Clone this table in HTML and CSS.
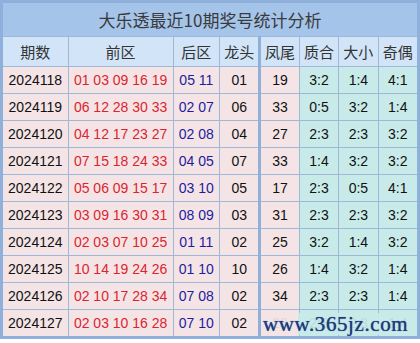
FILE: index.html
```html
<!DOCTYPE html>
<html>
<head>
<meta charset="utf-8">
<link rel="stylesheet" href="styles.css">
</head>
<body>
<div class="wrap">
<table class="stats">
<colgroup>
<col class="c-qi"><col class="c-qian"><col class="c-hou"><col class="c-long"><col class="c-feng"><col class="c-zh"><col class="c-dx"><col class="c-jo">
</colgroup>
<thead>
<tr><th colspan="8" class="title">大乐透最近10期奖号统计分析</th></tr>
<tr class="head"><th>期数</th><th>前区</th><th>后区</th><th class="sep">龙头</th><th>凤尾</th><th>质合</th><th>大小</th><th>奇偶</th></tr>
</thead>
<tbody>
<tr><td>2024118</td><td class="red">01 03 09 16 19</td><td class="blue">05 11</td><td class="sep">01</td><td>19</td><td class="g">3:2</td><td class="g">1:4</td><td class="g">4:1</td></tr>
<tr><td>2024119</td><td class="red">06 12 28 30 33</td><td class="blue">02 07</td><td class="sep">06</td><td>33</td><td class="g">0:5</td><td class="g">3:2</td><td class="g">1:4</td></tr>
<tr><td>2024120</td><td class="red">04 12 17 23 27</td><td class="blue">02 08</td><td class="sep">04</td><td>27</td><td class="g">2:3</td><td class="g">2:3</td><td class="g">3:2</td></tr>
<tr><td>2024121</td><td class="red">07 15 18 24 33</td><td class="blue">04 05</td><td class="sep">07</td><td>33</td><td class="g">1:4</td><td class="g">3:2</td><td class="g">3:2</td></tr>
<tr><td>2024122</td><td class="red">05 06 09 15 17</td><td class="blue">03 10</td><td class="sep">05</td><td>17</td><td class="g">2:3</td><td class="g">0:5</td><td class="g">4:1</td></tr>
<tr><td>2024123</td><td class="red">03 09 16 30 31</td><td class="blue">08 09</td><td class="sep">03</td><td>31</td><td class="g">2:3</td><td class="g">2:3</td><td class="g">3:2</td></tr>
<tr><td>2024124</td><td class="red">02 03 07 10 25</td><td class="blue">01 11</td><td class="sep">02</td><td>25</td><td class="g">3:2</td><td class="g">1:4</td><td class="g">3:2</td></tr>
<tr><td>2024125</td><td class="red">10 14 19 24 26</td><td class="blue">01 10</td><td class="sep">10</td><td>26</td><td class="g">1:4</td><td class="g">3:2</td><td class="g">1:4</td></tr>
<tr><td>2024126</td><td class="red">02 10 17 28 34</td><td class="blue">07 08</td><td class="sep">02</td><td>34</td><td class="g">2:3</td><td class="g">2:3</td><td class="g">1:4</td></tr>
<tr><td>2024127</td><td class="red">02 03 10 16 28</td><td class="blue">07 10</td><td class="sep">02</td><td>28</td><td class="g">2:3</td><td class="g">2:3</td><td class="g">1:4</td></tr>
</tbody>
</table>
<div class="mark">www.365jz.com</div>
</div>
</body>
</html>
```
FILE: styles.css
```css
html, body {
  margin: 0;
  padding: 0;
  background: #ffffff;
}
.wrap {
  position: relative;
  width: 420px;
  height: 343px;
}
.stats {
  width: 420px;
  border-collapse: collapse;
  table-layout: fixed;
  border: 3px solid #8fb0da;
  font-family: "Liberation Sans", "Noto Sans CJK SC", sans-serif;
  font-size: 14px;
  color: #111;
}
.c-qi { width: 66px; }
.c-qian { width: 104px; }
.c-hou { width: 46px; }
.c-long { width: 40px; }
.c-feng { width: 39px; }
.c-zh { width: 39px; }
.c-dx { width: 39px; }
.c-jo { width: 40px; }
.stats th, .stats td {
  border: 1px solid #9fb8d8;
  padding: 0;
  text-align: center;
  white-space: nowrap;
  overflow: hidden;
}
.stats th.title {
  height: 33px;
  background: #a5c4ea;
  font-family: "Noto Sans CJK SC", sans-serif;
  font-size: 17px;
  font-weight: normal;
  color: #3a3a3a;
  border-bottom: 1px solid #9fb8d8;
}
.head th {
  height: 29px;
  background: #d2e5f8;
  font-family: "Noto Sans CJK SC", sans-serif;
  font-size: 15px;
  font-weight: normal;
  color: #333;
}
.stats td {
  height: 26px;
  background: #f4e4e6;
}
.stats td.g {
  background: #c8ebe9;
}
.stats .sep {
  border-right: 3px solid #8fb0da;
}
.red { color: #dc2430; }
.blue { color: #1d1d9e; }
.mark {
  position: absolute;
  left: 263px;
  top: 313px;
  height: 22px;
  line-height: 22px;
  padding-right: 6px;
  font-family: "Liberation Serif", serif;
  font-size: 21px;
  font-weight: normal;
  letter-spacing: 0.6px;
  color: #1d3c7c;
  background: linear-gradient(to right, rgba(244,228,230,0.92) 0 35px, rgba(200,235,233,0.92) 35px);
  text-shadow: 0 0 1px #1d3c7c, 0 0 2px #ffffff;
}
```
